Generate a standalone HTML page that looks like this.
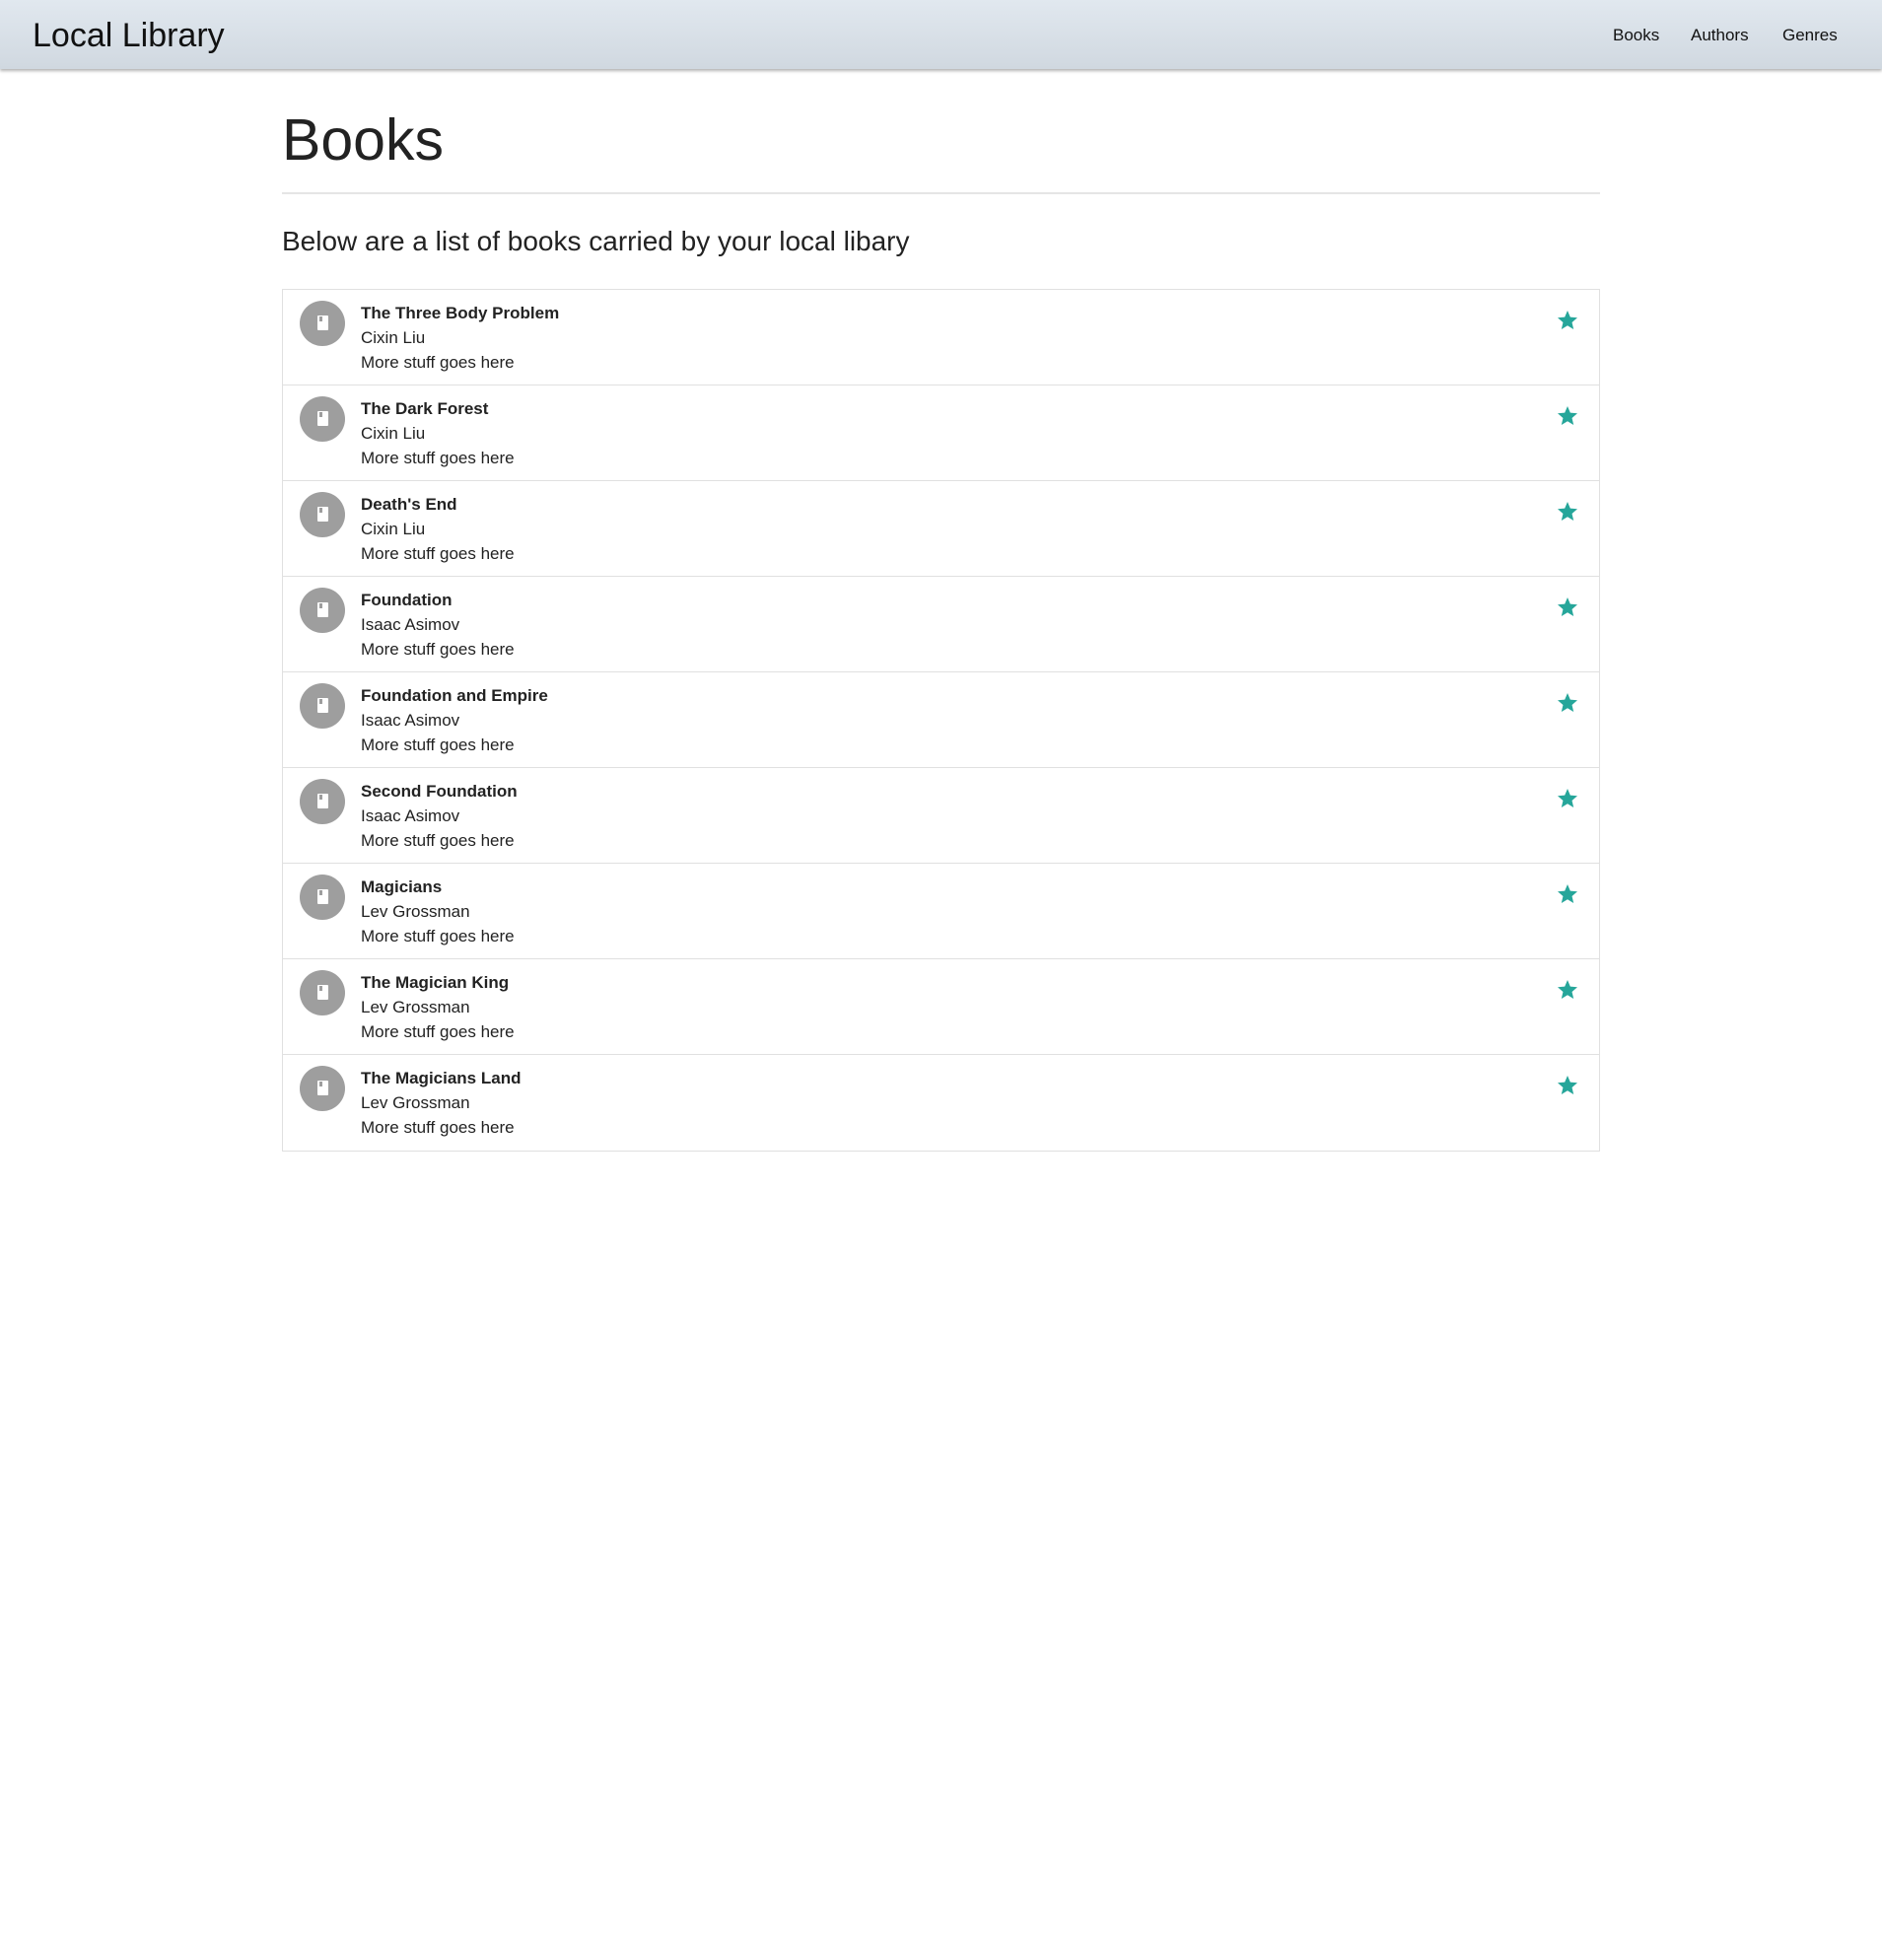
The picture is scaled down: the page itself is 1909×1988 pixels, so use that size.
<!DOCTYPE html>
<html><head><meta charset="utf-8"><style>
*{box-sizing:border-box;margin:0;padding:0}
body{width:1909px;height:1988px;background:#fff;font-family:"Liberation Sans",sans-serif;color:#212121;position:relative;overflow:hidden}
.nav{position:absolute;left:0;top:0;width:1909px;height:70px;background:linear-gradient(#e1e8ef,#d0d8e0);box-shadow:0 2px 3px rgba(0,0,0,.3)}
.brand{position:absolute;left:33px;top:17px;font-size:34px;color:#111}
.nl{position:absolute;top:26px;font-size:17px;color:#111}
h1{position:absolute;left:286px;top:108px;font-size:59px;font-weight:normal;color:#222}
.hr{position:absolute;left:286px;top:195px;width:1337px;height:2px;background:#e5e5e5}
.sub{position:absolute;left:286px;top:229px;font-size:28px;color:#222}
.list{position:absolute;left:286px;top:293px;width:1337px;border:1px solid #e0e0e0}
.row{height:97px;border-bottom:1px solid #e0e0e0;position:relative}
.row:last-child{border-bottom:none}
.av{position:absolute;left:17px;top:11px;width:46px;height:46px;border-radius:50%;background:#9e9e9e}
.av:before{content:"";position:absolute;left:18px;top:15px;width:11px;height:15px;background:#fff;border-radius:1px}
.av:after{content:"";position:absolute;left:20px;top:16px;width:3px;height:5px;background:#9e9e9e}
.t{position:absolute;left:79px;top:11px;font-size:17px;line-height:25px;color:#222}
.t b{font-weight:bold}
.star{position:absolute;left:1291px;top:19px;width:24px;height:24px}
</style></head><body>
<div class="nav"><div class="brand">Local Library</div>
<div class="nl" style="left:1636px">Books</div><div class="nl" style="left:1715px">Authors</div><div class="nl" style="left:1808px">Genres</div></div>
<h1>Books</h1>
<div class="hr"></div>
<div class="sub">Below are a list of books carried by your local libary</div>
<div class="list">
<div class="row"><div class="av"></div><div class="t"><b>The Three Body Problem</b><br>Cixin Liu<br>More stuff goes here</div><svg class="star" viewBox="0 0 24 24"><path fill="#26a69a" d="M12 17.27L18.18 21l-1.64-7.03L22 9.24l-7.19-.61L12 2 9.19 8.63 2 9.24l5.46 4.73L5.82 21z"/></svg></div>
<div class="row"><div class="av"></div><div class="t"><b>The Dark Forest</b><br>Cixin Liu<br>More stuff goes here</div><svg class="star" viewBox="0 0 24 24"><path fill="#26a69a" d="M12 17.27L18.18 21l-1.64-7.03L22 9.24l-7.19-.61L12 2 9.19 8.63 2 9.24l5.46 4.73L5.82 21z"/></svg></div>
<div class="row"><div class="av"></div><div class="t"><b>Death's End</b><br>Cixin Liu<br>More stuff goes here</div><svg class="star" viewBox="0 0 24 24"><path fill="#26a69a" d="M12 17.27L18.18 21l-1.64-7.03L22 9.24l-7.19-.61L12 2 9.19 8.63 2 9.24l5.46 4.73L5.82 21z"/></svg></div>
<div class="row"><div class="av"></div><div class="t"><b>Foundation</b><br>Isaac Asimov<br>More stuff goes here</div><svg class="star" viewBox="0 0 24 24"><path fill="#26a69a" d="M12 17.27L18.18 21l-1.64-7.03L22 9.24l-7.19-.61L12 2 9.19 8.63 2 9.24l5.46 4.73L5.82 21z"/></svg></div>
<div class="row"><div class="av"></div><div class="t"><b>Foundation and Empire</b><br>Isaac Asimov<br>More stuff goes here</div><svg class="star" viewBox="0 0 24 24"><path fill="#26a69a" d="M12 17.27L18.18 21l-1.64-7.03L22 9.24l-7.19-.61L12 2 9.19 8.63 2 9.24l5.46 4.73L5.82 21z"/></svg></div>
<div class="row"><div class="av"></div><div class="t"><b>Second Foundation</b><br>Isaac Asimov<br>More stuff goes here</div><svg class="star" viewBox="0 0 24 24"><path fill="#26a69a" d="M12 17.27L18.18 21l-1.64-7.03L22 9.24l-7.19-.61L12 2 9.19 8.63 2 9.24l5.46 4.73L5.82 21z"/></svg></div>
<div class="row"><div class="av"></div><div class="t"><b>Magicians</b><br>Lev Grossman<br>More stuff goes here</div><svg class="star" viewBox="0 0 24 24"><path fill="#26a69a" d="M12 17.27L18.18 21l-1.64-7.03L22 9.24l-7.19-.61L12 2 9.19 8.63 2 9.24l5.46 4.73L5.82 21z"/></svg></div>
<div class="row"><div class="av"></div><div class="t"><b>The Magician King</b><br>Lev Grossman<br>More stuff goes here</div><svg class="star" viewBox="0 0 24 24"><path fill="#26a69a" d="M12 17.27L18.18 21l-1.64-7.03L22 9.24l-7.19-.61L12 2 9.19 8.63 2 9.24l5.46 4.73L5.82 21z"/></svg></div>
<div class="row"><div class="av"></div><div class="t"><b>The Magicians Land</b><br>Lev Grossman<br>More stuff goes here</div><svg class="star" viewBox="0 0 24 24"><path fill="#26a69a" d="M12 17.27L18.18 21l-1.64-7.03L22 9.24l-7.19-.61L12 2 9.19 8.63 2 9.24l5.46 4.73L5.82 21z"/></svg></div>
</div>
</body></html>
